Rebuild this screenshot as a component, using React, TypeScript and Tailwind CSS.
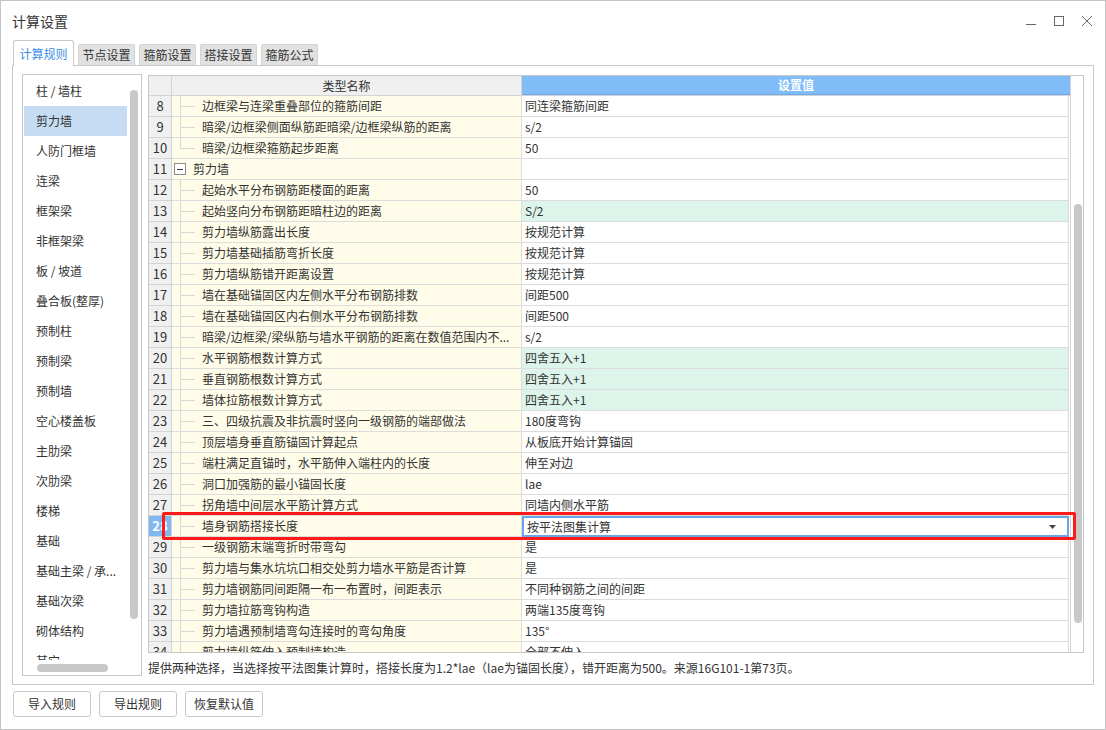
import React from 'react'

interface Row {
  n: number
  name: string
  value: string
  group?: boolean
  last?: boolean
  green?: boolean
  sel?: boolean
}

const rows: Row[] = [
  { n: 8, name: '边框梁与连梁重叠部位的箍筋间距', value: '同连梁箍筋间距' },
  { n: 9, name: '暗梁/边框梁侧面纵筋距暗梁/边框梁纵筋的距离', value: 's/2' },
  { n: 10, name: '暗梁/边框梁箍筋起步距离', value: '50', last: true },
  { n: 11, name: '剪力墙', value: '', group: true },
  { n: 12, name: '起始水平分布钢筋距楼面的距离', value: '50' },
  { n: 13, name: '起始竖向分布钢筋距暗柱边的距离', value: 'S/2', green: true },
  { n: 14, name: '剪力墙纵筋露出长度', value: '按规范计算' },
  { n: 15, name: '剪力墙基础插筋弯折长度', value: '按规范计算' },
  { n: 16, name: '剪力墙纵筋错开距离设置', value: '按规范计算' },
  { n: 17, name: '墙在基础锚固区内左侧水平分布钢筋排数', value: '间距500' },
  { n: 18, name: '墙在基础锚固区内右侧水平分布钢筋排数', value: '间距500' },
  { n: 19, name: '暗梁/边框梁/梁纵筋与墙水平钢筋的距离在数值范围内不...', value: 's/2' },
  { n: 20, name: '水平钢筋根数计算方式', value: '四舍五入+1', green: true },
  { n: 21, name: '垂直钢筋根数计算方式', value: '四舍五入+1', green: true },
  { n: 22, name: '墙体拉筋根数计算方式', value: '四舍五入+1', green: true },
  { n: 23, name: '三、四级抗震及非抗震时竖向一级钢筋的端部做法', value: '180度弯钩' },
  { n: 24, name: '顶层墙身垂直筋锚固计算起点', value: '从板底开始计算锚固' },
  { n: 25, name: '端柱满足直锚时，水平筋伸入端柱内的长度', value: '伸至对边' },
  { n: 26, name: '洞口加强筋的最小锚固长度', value: 'lae' },
  { n: 27, name: '拐角墙中间层水平筋计算方式', value: '同墙内侧水平筋' },
  { n: 28, name: '墙身钢筋搭接长度', value: '按平法图集计算', sel: true },
  { n: 29, name: '一级钢筋末端弯折时带弯勾', value: '是' },
  { n: 30, name: '剪力墙与集水坑坑口相交处剪力墙水平筋是否计算', value: '是' },
  { n: 31, name: '剪力墙钢筋同间距隔一布一布置时，间距表示', value: '不同种钢筋之间的间距' },
  { n: 32, name: '剪力墙拉筋弯钩构造', value: '两端135度弯钩' },
  { n: 33, name: '剪力墙遇预制墙弯勾连接时的弯勾角度', value: '135°' },
  { n: 34, name: '剪力墙纵筋伸入预制墙构造', value: '全部不伸入' },
]

const items = [
  '柱 / 墙柱', '剪力墙', '人防门框墙', '连梁', '框架梁', '非框架梁', '板 / 坡道', '叠合板(整厚)',
  '预制柱', '预制梁', '预制墙', '空心楼盖板', '主肋梁', '次肋梁', '楼梯', '基础', '基础主梁 / 承...',
  '基础次梁', '砌体结构', '其它',
]

const tabs = ['计算规则', '节点设置', '箍筋设置', '搭接设置', '箍筋公式']

export default function App() {
  return (
    <div className="relative w-[1106px] h-[730px] border border-[#c4c4c4] bg-white text-[#333] font-['Noto_Sans_CJK_SC','Noto_Sans',sans-serif] overflow-hidden">
      {/* title bar */}
      <div className="h-[39px] flex items-center justify-between pl-[11px] pr-[12px]">
        <span className="text-[14px] leading-none">计算设置</span>
        <div className="flex items-center gap-[16px] text-[#666]">
          <svg width="12" height="12" viewBox="0 0 12 12"><path d="M1 9.5h10" stroke="currentColor" strokeWidth="1" /></svg>
          <svg width="12" height="12" viewBox="0 0 12 12"><rect x="1.5" y="1.5" width="9" height="9" fill="none" stroke="currentColor" strokeWidth="1" /></svg>
          <svg width="12" height="12" viewBox="0 0 12 12"><path d="M1 1l10 10M11 1L1 11" stroke="currentColor" strokeWidth="1" /></svg>
        </div>
      </div>

      {/* tabs */}
      <div className="relative z-10 flex items-end h-[25px] pl-[12px] gap-[4px]">
        {tabs.map((t, i) =>
          i === 0 ? (
            <div key={t} className="h-[26px] -mb-px w-[61px] flex items-center justify-center bg-white border border-b-0 border-[#c8c8c8] rounded-t-[3px] text-[12px] text-[#3a8ee6]">
              {t}
            </div>
          ) : (
            <div key={t} className="h-[21px] w-[57px] flex items-center justify-center bg-[#e1e1e1] border border-b-0 border-[#d4d4d4] rounded-t-[2px] text-[12px]">
              {t}
            </div>
          ),
        )}
      </div>

      {/* panel */}
      <div className="ml-[11px] w-[1082px] h-[620px] border border-[#c8c8c8] pt-[8px] pl-[9px] flex gap-[6px]">
        {/* left list */}
        <div className="relative w-[120px] h-[602px] border border-[#c8c8c8]">
          <div className="h-[585px] overflow-hidden pt-px pl-px">
            {items.map((it, i) => (
              <div
                key={it}
                className={`h-[30px] w-[103px] flex items-center pl-[12px] text-[12px] whitespace-nowrap ${i === 1 ? 'bg-[#c5dcf2]' : ''}`}
              >
                {it}
              </div>
            ))}
          </div>
          <div className="absolute left-[107px] top-[15px] w-[8px] h-[529px] rounded-[4px] bg-[#c8c8c8]" />
          <div className="absolute left-[14px] top-[589px] w-[71px] h-[8px] rounded-[4px] bg-[#c8c8c8]" />
        </div>

        {/* grid + description */}
        <div className="flex flex-col pt-px">
          <div className="w-[936px] h-[578px] border border-[#c8c8c8] flex">
            <div className="w-[921px] h-full overflow-hidden">
              <div className="flex h-[20px] border-b border-[#d4d4d4] text-[12px]">
                <div className="w-[23px] bg-[#f0f0f0] border-r border-[#d4d4d4]" />
                <div className="w-[350px] bg-[#f0f0f0] border-r border-[#d4d4d4] flex items-center justify-center">类型名称</div>
                <div className="w-[548px] bg-[#80bdf8] border-b border-[#6aa9ea] flex items-center justify-center text-white font-bold">设置值</div>
              </div>
              {rows.map(r => (
                <div key={r.n} className="flex h-[21px] text-[12px]">
                  <div
                    className={`w-[23px] shrink-0 border-r border-b border-[#d4d4d4] flex items-center justify-center text-[13px] ${r.sel ? 'bg-[#80b9f2] text-white font-bold' : 'bg-[#f0f0f0]'}`}
                  >
                    {r.n}
                  </div>
                  <div className="relative w-[350px] shrink-0 bg-[#fffde9] border-r border-b border-[#dcdcdc] leading-[20px] whitespace-nowrap overflow-hidden">
                    {r.group ? (
                      <div className="flex items-center h-full pl-[2px] gap-[7px]">
                        <span className="w-[12px] h-[12px] border border-[#8c8c8c] bg-white flex items-center justify-center">
                          <span className="w-[6px] h-px bg-[#444]" />
                        </span>
                        <span>{r.name}</span>
                      </div>
                    ) : (
                      <>
                        <span className={`absolute left-[8px] top-0 w-px bg-[#d8d8d8] ${r.last ? 'h-[10px]' : 'h-[21px]'}`} />
                        <span className="absolute left-[8px] top-[10px] w-[15px] h-px bg-[#d8d8d8]" />
                        <div className="pl-[30px] pr-[4px]">{r.name}</div>
                      </>
                    )}
                  </div>
                  {r.sel ? (
                    <div className="w-[547px] shrink-0 border-b border-[#dcdcdc]">
                      <div className="h-[21px] border-2 border-[#6aa6e6] bg-white flex items-center justify-between pl-[3px] pr-[11px] -mb-px">
                        <span>{r.value}</span>
                        <svg width="7" height="4" viewBox="0 0 7 4"><path d="M0 0h7L3.5 4z" fill="#444" /></svg>
                      </div>
                    </div>
                  ) : (
                    <div
                      className={`w-[547px] shrink-0 border-r border-b border-[#dcdcdc] pl-[3px] leading-[20px] ${r.green ? 'bg-[#ddf4ea]' : 'bg-white'}`}
                    >
                      {r.value}
                    </div>
                  )}
                </div>
              ))}
            </div>
            <div className="relative flex-1 border-l border-[#d4d4d4]">
              <div className="absolute left-[3px] top-[128px] w-[8px] h-[419px] rounded-[4px] bg-[#c8c8c8]" />
            </div>
          </div>
          <div className="pt-[6px] text-[12px] leading-[17px] whitespace-nowrap">
            提供两种选择，当选择按平法图集计算时，搭接长度为1.2*lae（lae为锚固长度），错开距离为500。来源16G101-1第73页。
          </div>
        </div>
      </div>

      {/* buttons */}
      <div className="flex gap-[8px] pl-[12px] pt-[6px]">
        {['导入规则', '导出规则', '恢复默认值'].map(b => (
          <button key={b} className="w-[78px] h-[26px] border border-[#c8c8c8] rounded-[3px] bg-white text-[12px] flex items-center justify-center">
            {b}
          </button>
        ))}
      </div>

      {/* red annotation */}
      <div className="absolute left-[161px] top-[511px] w-[914px] h-[28px] border-[3px] border-[#ff1a1a] rounded-[2px]" />
    </div>
  )
}
